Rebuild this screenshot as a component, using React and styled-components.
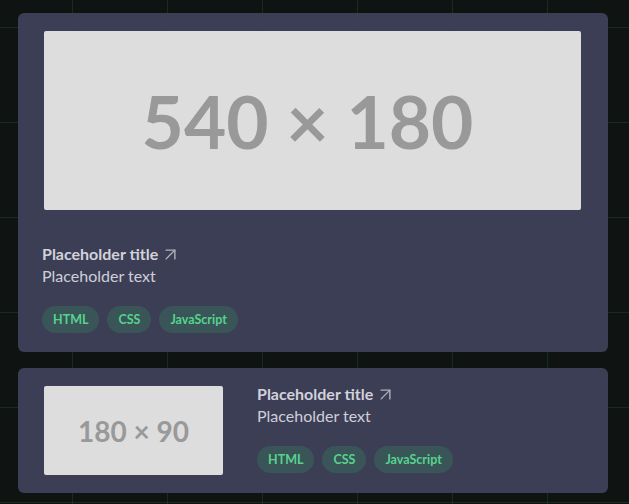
import React from "react";
import styled, { createGlobalStyle } from "styled-components";
import { ArrowUpRight } from "lucide-react";

const Global = createGlobalStyle`
  html, body { margin: 0; padding: 0; }
  body {
    background-color: #0f1311;
    background-image:
      linear-gradient(to right, rgba(70, 150, 100, 0.18) 1px, transparent 1px),
      linear-gradient(to bottom, rgba(70, 150, 100, 0.18) 1px, transparent 1px);
    background-size: 95px 95px;
    background-position: 72px 27px;
    min-height: 504px;
    font-family: Lato, "Open Sans", sans-serif;
  }
`;

const Page = styled.main`
  display: flex;
  flex-direction: column;
  gap: 16px;
  padding: 13px 21px 0 18px;
`;

const Card = styled.article`
  display: flex;
  flex-direction: ${(p) => (p.$row ? "row" : "column")};
  align-items: ${(p) => (p.$row ? "flex-start" : "stretch")};
  gap: ${(p) => (p.$row ? "34px" : "33px")};
  padding: ${(p) => (p.$row ? "15px 24px 15px 26px" : "18px 27px 19px 24px")};
  background: rgba(62, 65, 90, 0.96);
  border-radius: 6px;
`;

const Placeholder = styled.div`
  flex: none;
  display: flex;
  align-items: center;
  justify-content: center;
  box-sizing: border-box;
  width: ${(p) => p.$w};
  height: ${(p) => p.$h}px;
  margin: ${(p) => p.$m || "0"};
  padding-right: ${(p) => p.$pr || 0}px;
  background: #dddddd;
  color: #999999;
  font-family: Lato, sans-serif;
  font-weight: 700;
  font-size: ${(p) => p.$fs}px;
  border-radius: 2px;
`;

const Body = styled.div`
  display: flex;
  flex-direction: column;
`;

const Title = styled.h3`
  margin: 0;
  display: flex;
  align-items: center;
  gap: 2px;
  font-size: 16px;
  line-height: 22px;
  font-weight: 700;
  color: #d2d2da;
  svg { color: #b0b0ba; margin-top: 1px; }
`;

const Text = styled.p`
  margin: 0;
  font-size: 16px;
  line-height: 22px;
  color: #cfcfd8;
`;

const Tags = styled.ul`
  list-style: none;
  display: flex;
  gap: 8px;
  margin: 19px 0 0;
  padding: 0;
`;

const Tag = styled.li`
  display: flex;
  align-items: center;
  height: 27px;
  padding: 0 11px;
  border-radius: 14px;
  background: #3a5558;
  color: #55d38e;
  font-size: 12.5px;
  font-weight: 700;
`;

const tags = ["HTML", "CSS", "JavaScript"];

function Info() {
  return (
    <Body>
      <Title>
        Placeholder title <ArrowUpRight size={21} strokeWidth={1.6} />
      </Title>
      <Text>Placeholder text</Text>
      <Tags>
        {tags.map((t) => (
          <Tag key={t}>{t}</Tag>
        ))}
      </Tags>
    </Body>
  );
}

export default function App() {
  return (
    <>
      <Global />
      <Page>
        <Card>
          <Placeholder $w="calc(100% - 2px)" $h={179} $m="0 0 0 2px" $pr={10} $fs={73}>
            540 × 180
          </Placeholder>
          <Info />
        </Card>
        <Card $row>
          <Placeholder $w="179px" $h={89} $m="3px 0" $fs={28}>
            180 × 90
          </Placeholder>
          <Info />
        </Card>
      </Page>
    </>
  );
}
